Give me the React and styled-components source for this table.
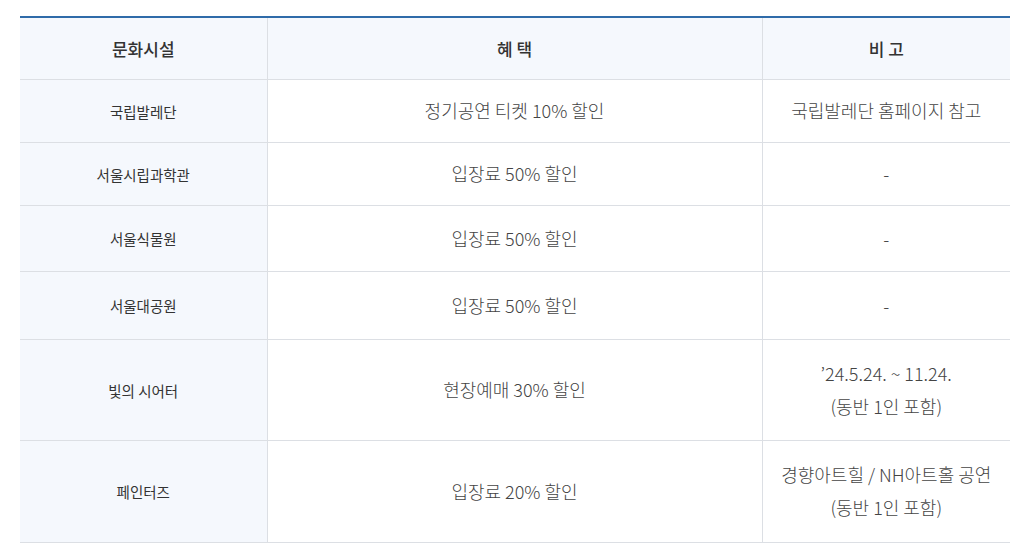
import styled, { createGlobalStyle } from 'styled-components'

const GlobalStyle = createGlobalStyle`
    body {
        margin: 0;
        background: #ffffff;
        font-family: "Noto Sans CJK KR", "Noto Sans", sans-serif;
        color: #333333;
    }
`
const Page = styled.div`
    padding: 16px 26px 0 20px;
`
const Table = styled.table`
    width: 990px;
    border-collapse: collapse;
    border-top: 2px solid #2f6ba9;
    table-layout: fixed;
`
const HeadCell = styled.th`
    height: 61px;
    padding: 0;
    background: #f5f8fd;
    font-size: 17px;
    font-weight: 500;
    color: #333333;
    text-align: center;
    border-bottom: 1px solid #dcdfe4;
    border-left: ${p => p.$first ? 'none' : '1px solid #dcdfe4'};
`
const Row = styled.tr`
    height: ${p => p.$h}px;
`
const NameCell = styled.td`
    padding: 0;
    background: #f5f8fd;
    font-size: 14.5px;
    font-weight: 400;
    color: #333333;
    text-align: center;
    border-bottom: 1px solid #dcdfe4;
`
const Cell = styled.td`
    padding: 0 0 1px;
    font-size: 18px;
    font-weight: 300;
    line-height: 33px;
    color: #444444;
    text-align: center;
    border-bottom: 1px solid #dcdfe4;
    border-left: 1px solid #dcdfe4;
`

const rows = [
    { name: '국립발레단', benefit: '정기공연 티켓 10% 할인', note: ['국립발레단 홈페이지 참고'], h: 63 },
    { name: '서울시립과학관', benefit: '입장료 50% 할인', note: ['-'], h: 63 },
    { name: '서울식물원', benefit: '입장료 50% 할인', note: ['-'], h: 66 },
    { name: '서울대공원', benefit: '입장료 50% 할인', note: ['-'], h: 68 },
    { name: '빛의 시어터', benefit: '현장예매 30% 할인', note: ['\u201924.5.24. ~ 11.24.', '(동반 1인 포함)'], h: 101 },
    { name: '페인터즈', benefit: '입장료 20% 할인', note: ['경향아트힐 / NH아트홀 공연', '(동반 1인 포함)'], h: 102 },
]

export default function App() {
    return (
        <Page>
            <GlobalStyle />
            <Table>
                <colgroup>
                    <col style={{ width: 247 }} />
                    <col style={{ width: 495 }} />
                    <col style={{ width: 248 }} />
                </colgroup>
                <thead>
                    <tr>
                        <HeadCell $first>문화시설</HeadCell>
                        <HeadCell>혜 택</HeadCell>
                        <HeadCell>비 고</HeadCell>
                    </tr>
                </thead>
                <tbody>
                    {rows.map(r => (
                        <Row key={r.name} $h={r.h}>
                            <NameCell>{r.name}</NameCell>
                            <Cell>{r.benefit}</Cell>
                            <Cell>
                                {r.note.map((line, i) => <div key={i}>{line}</div>)}
                            </Cell>
                        </Row>
                    ))}
                </tbody>
            </Table>
        </Page>
    )
}
